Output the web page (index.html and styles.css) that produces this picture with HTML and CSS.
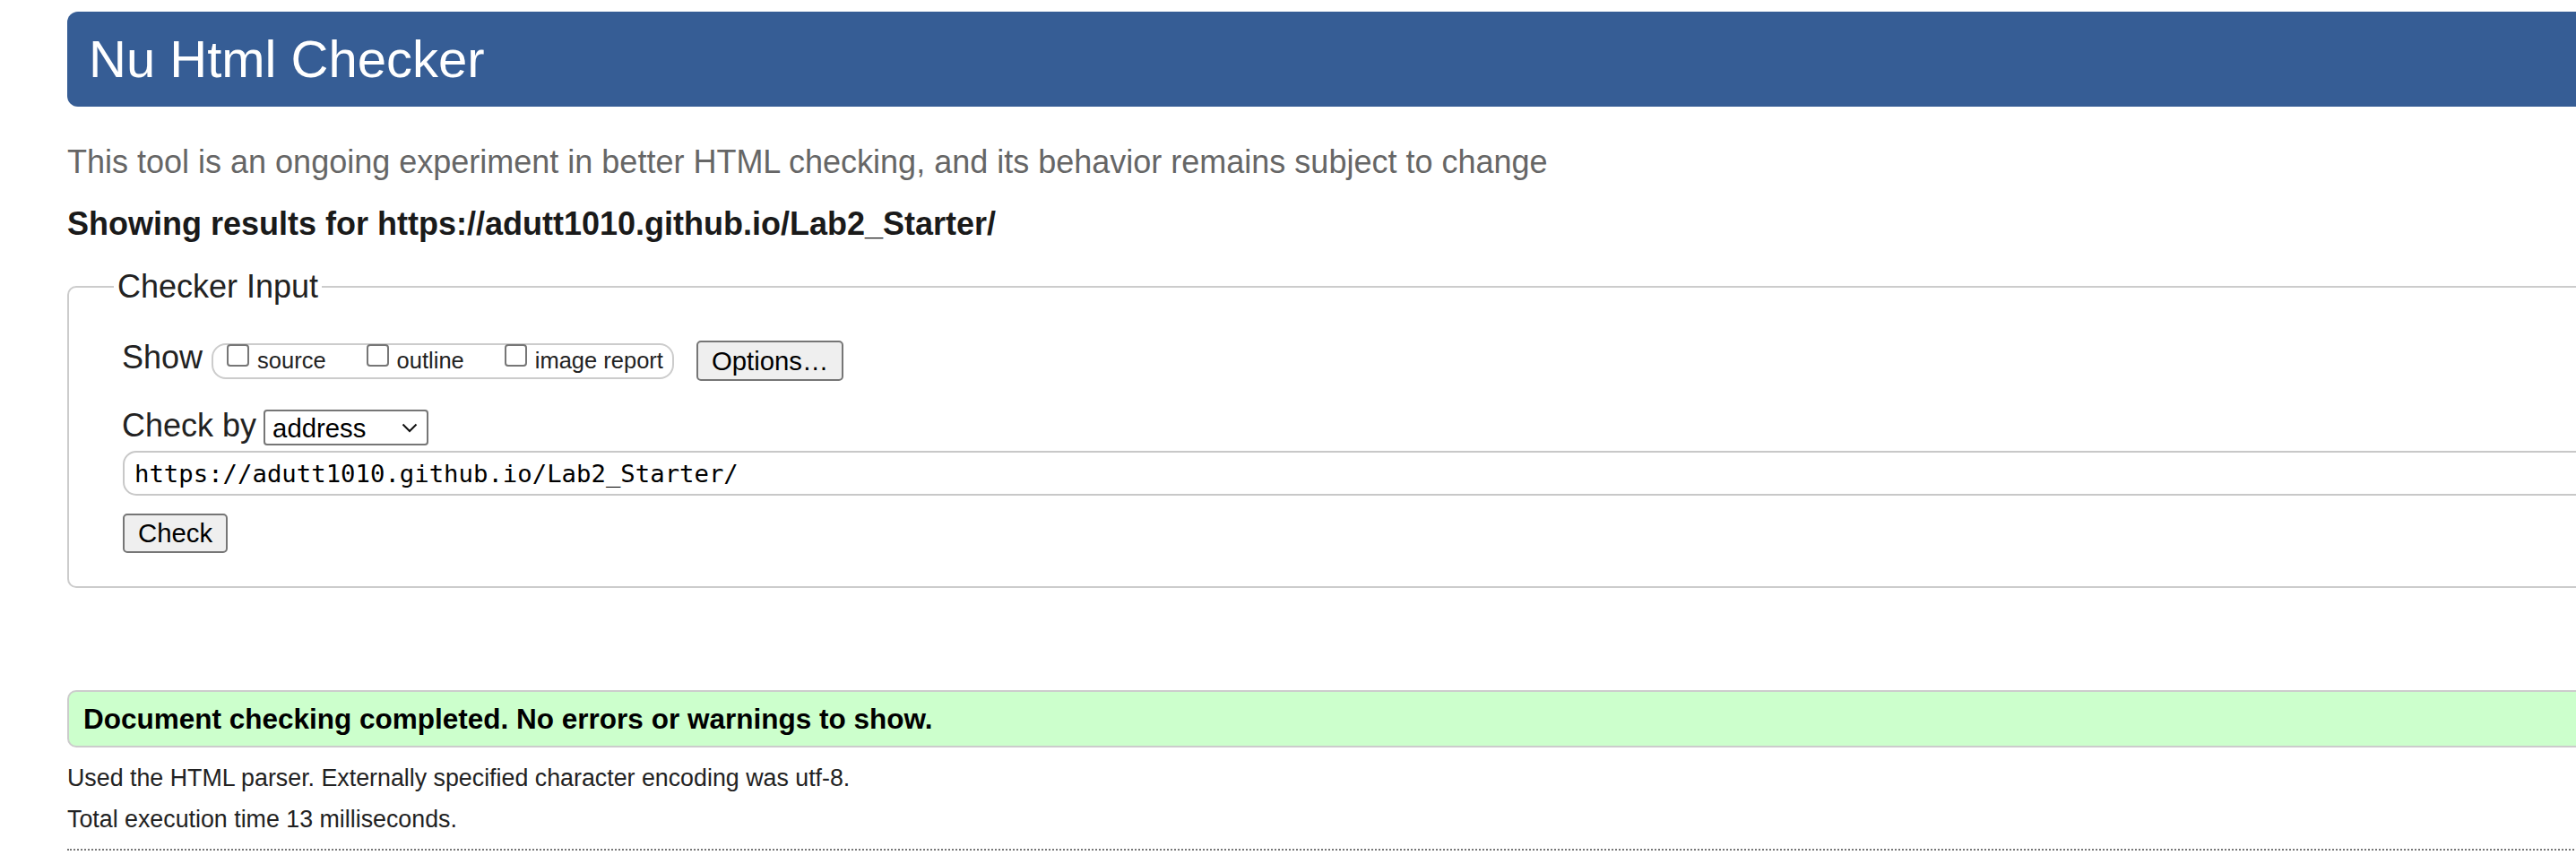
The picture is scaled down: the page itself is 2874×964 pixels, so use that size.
FILE: index.html
```
<!DOCTYPE html>
<html lang="en">
<head>
<meta charset="utf-8">
<title>Nu Html Checker</title>
<link rel="stylesheet" href="styles.css">
</head>
<body>
<div class="page">
  <h1 class="title">Nu Html Checker</h1>
  <p class="about">This tool is an ongoing experiment in better HTML checking, and its behavior remains subject to change</p>
  <h2 class="target">Showing results for https://adutt1010.github.io/Lab2_Starter/</h2>
  <form class="checker">
    <fieldset class="input-box">
      <legend class="legend">Checker Input</legend>
      <div class="row show-row">
        <span class="lbl">Show</span>
        <fieldset class="opts">
          <label class="opt"><input type="checkbox" class="cb"><span class="opt-text">source</span></label>
          <label class="opt"><input type="checkbox" class="cb"><span class="opt-text">outline</span></label>
          <label class="opt"><input type="checkbox" class="cb"><span class="opt-text">image report</span></label>
        </fieldset>
        <button type="button" class="btn options-btn">Options…</button>
      </div>
      <div class="row by-row">
        <span class="lbl">Check by</span>
        <span class="select-wrap">
          <select class="select"><option>address</option></select>
          <svg class="chevron" width="18" height="11" viewBox="0 0 18 11"><path d="M1.5 1.5 L9 9 L16.5 1.5" fill="none" stroke="#111" stroke-width="2"/></svg>
        </span>
      </div>
      <input class="url" type="text" value="https://adutt1010.github.io/Lab2_Starter/">
      <button type="button" class="btn check-btn">Check</button>
    </fieldset>
  </form>
  <p class="success">Document checking completed. No errors or warnings to show.</p>
  <p class="details">Used the HTML parser. Externally specified character encoding was utf-8.</p>
  <p class="details">Total execution time 13 milliseconds.</p>
  <hr class="rule">
</div>
</body>
</html>
```
FILE: styles.css
```
html, body {
  margin: 0;
  padding: 0;
  overflow: hidden;
  background: #fff;
}
body {
  font-family: "Liberation Sans", Arial, sans-serif;
  color: #222;
}
.page {
  width: 2840px;
  padding: 13px 0 0 75px;
}
.title {
  margin: 0;
  height: 106px;
  line-height: 106px;
  background: #365d95;
  color: #fff;
  font-size: 58px;
  font-weight: normal;
  padding-left: 24px;
  border-radius: 12px;
}
.about {
  margin: 42px 0 0;
  font-size: 36px;
  line-height: 40px;
  color: #666;
}
.target {
  margin: 29px 0 0;
  font-size: 36px;
  line-height: 40px;
  font-weight: bold;
  color: #1a1a1a;
}
.checker {
  margin: 30px 0 0;
}
.input-box {
  margin: 0;
  border: 2px solid #ccc;
  border-radius: 10px;
  padding: 0 0 37px 59px;
  min-width: 0;
}
.legend {
  font-size: 36px;
  line-height: 40px;
  padding: 0 4px;
  margin-left: -9px;
  color: #222;
}
.row {
  display: flex;
  align-items: flex-start;
}
.show-row {
  margin-top: 40px;
  height: 45px;
}
.by-row {
  margin-top: 32px;
  height: 40px;
}
.lbl {
  font-size: 36px;
  line-height: 40px;
  margin: -1px 10px 0 0;
}
.by-row .lbl {
  margin: -2px 8px 0 0;
}
.opts {
  margin: 3px 0 0;
  height: 40px;
  box-sizing: border-box;
  border: 2px solid #ccc;
  border-radius: 16px;
  padding: 0 10px 0 15px;
  display: flex;
  align-items: flex-start;
  gap: 45px;
  min-width: 0;
}
.opt {
  display: flex;
  align-items: flex-start;
}
.cb {
  appearance: none;
  -webkit-appearance: none;
  width: 25px;
  height: 25px;
  margin: -1px 9px 0 0;
  box-sizing: border-box;
  border: 2px solid #767676;
  border-radius: 4px;
  background: #fff;
}
.opt-text {
  font-size: 25.5px;
  line-height: 30px;
  margin-top: 2px;
}
.btn {
  font-family: "Liberation Sans", Arial, sans-serif;
  font-size: 29.33px;
  color: #000;
  background: #efefef;
  border: 2px solid #767676;
  border-radius: 5px;
  box-sizing: border-box;
  display: flex;
  align-items: center;
  justify-content: center;
}
.options-btn {
  margin-left: 25px;
  height: 45px;
  padding: 0 15px;
}
.select-wrap {
  position: relative;
  display: block;
  width: 184px;
  height: 40px;
}
.select {
  appearance: none;
  -webkit-appearance: none;
  width: 184px;
  height: 40px;
  box-sizing: border-box;
  border: 2px solid #767676;
  border-radius: 4px;
  background: #fff;
  color: #000;
  font-family: "Liberation Sans", Arial, sans-serif;
  font-size: 29.33px;
  padding: 0 0 0 8px;
}
.chevron {
  position: absolute;
  right: 12px;
  top: 15px;
  pointer-events: none;
}
.url {
  display: block;
  margin-top: 6px;
  width: 2790px;
  height: 50px;
  box-sizing: border-box;
  border: 2px solid #c8c8c8;
  border-radius: 15px;
  padding: 0 0 0 11px;
  font-family: "DejaVu Sans Mono", "Liberation Mono", monospace;
  font-size: 27.3px;
  color: #000;
  margin-left: 1px;
}
.check-btn {
  margin: 20px 0 0 1px;
  height: 44px;
  padding: 0 15px;
}
.success {
  margin: 114px 0 0;
  height: 64px;
  box-sizing: border-box;
  border: 2px solid #ccc;
  border-radius: 10px;
  background: #ccffcc;
  color: #000;
  font-size: 31.5px;
  font-weight: bold;
  line-height: 60px;
  padding-left: 16px;
}
.details {
  margin: 18px 0 0;
  font-size: 26.8px;
  line-height: 32px;
  color: #222;
}
.details + .details {
  margin-top: 14px;
}
.rule {
  margin: 17px 0 0;
  border: 0;
  border-top: 2px dotted #777;
  height: 0;
}
```
